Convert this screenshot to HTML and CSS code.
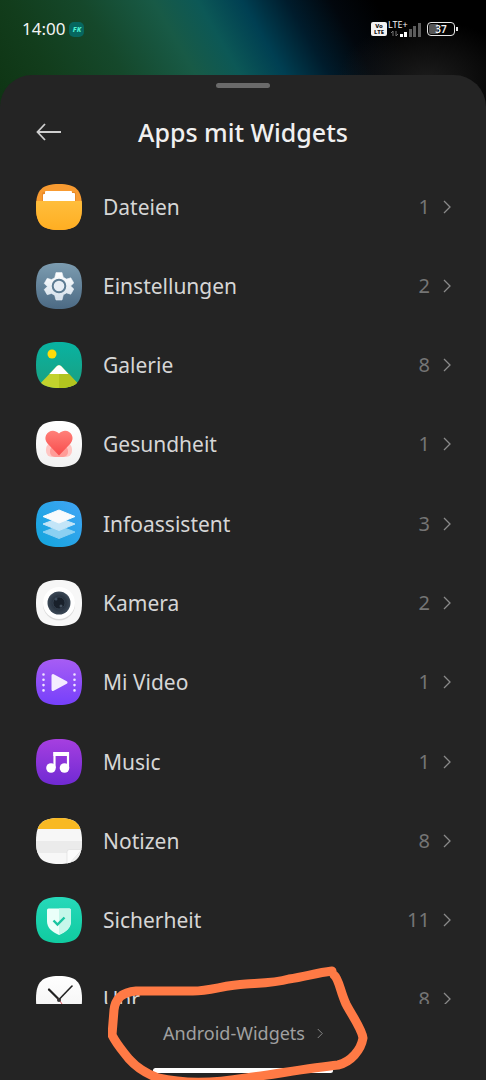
FILE: index.html
```html
<!DOCTYPE html>
<html lang="de">
<head>
    <meta charset="UTF-8">
    <meta name="viewport" content="width=device-width, initial-scale=1.0">
    <title>Apps mit Widgets</title>
    <link rel="stylesheet" href="styles.css">
</head>
<body>
    <!-- shared shapes -->
    <svg class="defs" width="0" height="0" aria-hidden="true">
        <defs>
            <clipPath id="tile"><path d="M23 0C40 0 46 6 46 23S40 46 23 46 0 40 0 23 6 0 23 0Z"/></clipPath>
            <linearGradient id="gFiles" x2="0" y2="1"><stop stop-color="#ffbe3c"/><stop offset="1" stop-color="#ffae22"/></linearGradient>
            <linearGradient id="gSettings" x2="0" y2="1"><stop stop-color="#7c9cb0"/><stop offset="1" stop-color="#4c6a84"/></linearGradient>
            <linearGradient id="gGear" x2="0" y2="1"><stop stop-color="#fff"/><stop offset="1" stop-color="#d3dfea"/></linearGradient>
            <linearGradient id="gGallery" x2="0" y2="1"><stop stop-color="#08b3a2"/><stop offset="1" stop-color="#1b9f80"/></linearGradient>
            <linearGradient id="gWhite" x2="0" y2="1"><stop stop-color="#fff"/><stop offset="1" stop-color="#f1f1f1"/></linearGradient>
            <linearGradient id="gHeart" x2="0" y2="1"><stop stop-color="#ff8079"/><stop offset="1" stop-color="#f84c4c"/></linearGradient>
            <linearGradient id="gInfo" x1="1" x2="0" y2="1"><stop stop-color="#42a4f5"/><stop offset="1" stop-color="#11a5dc"/></linearGradient>
            <radialGradient id="gLens"><stop stop-color="#161e28"/><stop offset=".6" stop-color="#2a3542"/><stop offset="1" stop-color="#3c4957"/></radialGradient>
            <linearGradient id="gVideo" x2="0" y2="1"><stop stop-color="#a75df4"/><stop offset="1" stop-color="#7640fb"/></linearGradient>
            <linearGradient id="gMusic" x2="0" y2="1"><stop stop-color="#a63fe0"/><stop offset="1" stop-color="#702ad3"/></linearGradient>
            <linearGradient id="gSafe" x2="0" y2="1"><stop stop-color="#26d9ba"/><stop offset="1" stop-color="#10cba0"/></linearGradient>
        </defs>
        <symbol id="chevron" viewBox="0 0 8 14"><path d="M1 1L7 7L1 13" fill="none" stroke="currentColor" stroke-width="1.3"/></symbol>
    </svg>

    <div class="status">
        <span class="time">14:00</span>
        <span class="fk">FK</span>
        <span class="volte"><span>Vo</span><span>LTE</span></span>
        <svg class="signal" width="33" height="18" viewBox="0 0 33 18">
            <text x="0" y="8">LTE+</text>
            <path d="M5 16V11L3 13M8 11V16L10 14" fill="none" stroke="#777"/>
            <path d="M12 14h3v3h-3zM16 12h3v5h-3z" fill="#fff"/>
            <path d="M21 9h3v8h-3zM25 6h3v11h-3zM30 3h3v14h-3z" fill="#5c5c5c"/>
        </svg>
        <span class="battery">37</span>
    </div>

    <main class="sheet">
        <div class="handle"></div>
        <header class="header">
            <button class="back" type="button" aria-label="Zurück">
                <svg width="26" height="18" viewBox="0 0 26 18"><path d="M25 9H2M9 1L1.500 9L9 17" fill="none" stroke="#cfcfcf" stroke-width="1.800"/></svg>
            </button>
            <h1>Apps mit Widgets</h1>
        </header>

        <div class="list-wrap">
            <ul class="list">
                <li><a class="row" href="#dateien">
                    <svg class="icon" viewBox="0 0 46 46"><g clip-path="url(#tile)"><rect width="46" height="46" fill="#f89b31"/><path d="M6 10Q6 8 8 8H38Q40 8 40 10V18H6Z" fill="#e98a28"/><path d="M9 8Q9 7 10 7H35Q36 7 36 8V9H38Q39 9 39 10V18H7V11Q7 10 8 10H9Z" fill="#fff"/><rect y="17" width="46" height="29" fill="url(#gFiles)"/></g></svg>
                    <span class="name">Dateien</span><span class="count">1</span><svg class="chev"><use href="#chevron"/></svg></a></li>
                <li><a class="row" href="#einstellungen">
                    <svg class="icon" viewBox="0 0 46 46"><g clip-path="url(#tile)"><rect width="46" height="46" fill="url(#gSettings)"/><path d="M20 9.500h6l1.300 4.700 3.200 1.900 4.300-1.300 3 5.200-3.200 3 3.200 3-3 5.200-4.300-1.300-3.200 1.900L26 37h-6l-1.300-4.700-3.200-1.900-4.300 1.300-3-5.200 3.200-3-3.200-3 3-5.200 4.300 1.300 3.200-1.900Z" fill="url(#gGear)" stroke="#e9f0f6" stroke-linejoin="round" stroke-width=".6"/><circle cx="23" cy="23" r="6.300" fill="#e6edf4" stroke="#5d7c93" stroke-width="2"/></g></svg>
                    <span class="name">Einstellungen</span><span class="count">2</span><svg class="chev"><use href="#chevron"/></svg></a></li>
                <li><a class="row" href="#galerie">
                    <svg class="icon" viewBox="0 0 46 46"><g clip-path="url(#tile)"><rect width="46" height="46" fill="url(#gGallery)"/><circle cx="16" cy="12" r="4.500" fill="#ffdc0a"/><path d="M0 46L20.500 24.500Q23 22 25.500 24.500L46 46Z" fill="#c2d22d"/><path d="M23 32H33L46 46H23Z" fill="#b2c41f"/><path d="M13.400 32L20.500 24.500Q23 22 25.500 24.500L32.600 32Z" fill="#fff"/></g></svg>
                    <span class="name">Galerie</span><span class="count">8</span><svg class="chev"><use href="#chevron"/></svg></a></li>
                <li><a class="row" href="#gesundheit">
                    <svg class="icon" viewBox="0 0 46 46"><g clip-path="url(#tile)"><rect width="46" height="46" fill="url(#gWhite)"/><rect x="10" y="22" width="26" height="14" rx="6" fill="#ffc6c3"/><rect x="14" y="25" width="18" height="11" rx="5" fill="#ff9c98"/><path d="M23 34.500L11.500 22.500C5 15 15 5 23 12.500C31 5 41 15 34.500 22.500Z" fill="url(#gHeart)"/></g></svg>
                    <span class="name">Gesundheit</span><span class="count">1</span><svg class="chev"><use href="#chevron"/></svg></a></li>
                <li><a class="row" href="#infoassistent">
                    <svg class="icon" viewBox="0 0 46 46"><g clip-path="url(#tile)"><rect width="46" height="46" fill="url(#gInfo)"/><g stroke-linejoin="round"><path d="M23 25L39 31L23 37.500L7 31Z" fill="#8bd0f2" stroke="#8bd0f2"/><path d="M23 17L39 23L23 29.500L7 23Z" fill="#c3e5f8" stroke="#c3e5f8"/><path d="M23 9L39 15.500L23 22L7 15.500Z" fill="#f8fafc" stroke="#f8fafc"/></g></g></svg>
                    <span class="name">Infoassistent</span><span class="count">3</span><svg class="chev"><use href="#chevron"/></svg></a></li>
                <li><a class="row" href="#kamera">
                    <svg class="icon" viewBox="0 0 46 46"><g clip-path="url(#tile)"><rect width="46" height="46" fill="#f7f7f7"/><circle cx="23" cy="24.500" r="16" fill="#dcdcdc"/><circle cx="23" cy="23" r="16" fill="#fff"/><circle cx="23" cy="23" r="11.500" fill="url(#gLens)"/><circle cx="23" cy="23" r="6" fill="#18202a" stroke="#3b4856" stroke-width=".7"/><circle cx="25" cy="26" r="1.500" fill="#465361"/><circle cx="20" cy="19" r="1.500" fill="#3b4b5c"/></g></svg>
                    <span class="name">Kamera</span><span class="count">2</span><svg class="chev"><use href="#chevron"/></svg></a></li>
                <li><a class="row" href="#mivideo">
                    <svg class="icon" viewBox="0 0 46 46"><g clip-path="url(#tile)"><rect width="46" height="46" fill="url(#gVideo)"/><path d="M17 16.500L30 23.500L17 30.500Z" fill="#f4ecff" stroke="#f4ecff" stroke-width="3" stroke-linejoin="round"/><path d="M7.500 15.500V32M38.500 15.500V32" stroke="#f0e5ff" stroke-width="2.600" stroke-linecap="round" stroke-dasharray="0 5.300"/></g></svg>
                    <span class="name">Mi Video</span><span class="count">1</span><svg class="chev"><use href="#chevron"/></svg></a></li>
                <li><a class="row" href="#music">
                    <svg class="icon" viewBox="0 0 46 46"><g clip-path="url(#tile)"><rect width="46" height="46" fill="url(#gMusic)"/><path d="M18.500 29V14H32V29" fill="none" stroke="#fff" stroke-width="2.200"/><path d="M17.400 13H33V17H17.400Z" fill="#fff"/><circle cx="15" cy="29" r="4.800" fill="#fff"/><circle cx="28.500" cy="29" r="4.800" fill="#fff"/></g></svg>
                    <span class="name">Music</span><span class="count">1</span><svg class="chev"><use href="#chevron"/></svg></a></li>
                <li><a class="row" href="#notizen">
                    <svg class="icon" viewBox="0 0 46 46"><g clip-path="url(#tile)"><rect width="46" height="46" fill="#f7f7f7"/><rect width="46" height="11" fill="#f8b923"/><path d="M0 23H46V35H0Z" fill="#ebebeb"/><path d="M31 46V34Q31 31.500 33.500 31.500H46L34 45Z" fill="#fcfcfc" stroke="#dedede" stroke-width=".7"/><path d="M34 46L46 33V46Z" fill="#ededed"/></g></svg>
                    <span class="name">Notizen</span><span class="count">8</span><svg class="chev"><use href="#chevron"/></svg></a></li>
                <li><a class="row" href="#sicherheit">
                    <svg class="icon" viewBox="0 0 46 46"><g clip-path="url(#tile)"><rect width="46" height="46" fill="url(#gSafe)"/><path d="M11 13Q11 11.500 12.500 11.500H33.500Q35 11.500 35 13V24C35 31 30 35 23 38C16 35 11 31 11 24Z" fill="#eafff9"/><path d="M23 11.500H33.500Q35 11.500 35 13V24C35 31 30 35 23 38Z" fill="#c5f7ea"/><path d="M17.500 23.500L21.500 27.500L28.500 20.500" fill="none" stroke="#19c5a1" stroke-width="2.400"/></g></svg>
                    <span class="name">Sicherheit</span><span class="count">11</span><svg class="chev"><use href="#chevron"/></svg></a></li>
                <li><a class="row" href="#uhr">
                    <svg class="icon" viewBox="0 0 46 46"><g clip-path="url(#tile)"><rect width="46" height="46" fill="url(#gWhite)"/><path d="M13 13.500L23 23.500" stroke="#222" stroke-width="2.200" stroke-linecap="round"/><path d="M23 23.500L36 10" stroke="#222" stroke-width="1.600" stroke-linecap="round"/><path d="M22 22L30 34" stroke="#d8505a"/><circle cx="23" cy="24" r="2" fill="#333"/></g></svg>
                    <span class="name">Uhr</span><span class="count">8</span><svg class="chev"><use href="#chevron"/></svg></a></li>
            </ul>
        </div>

        <footer class="footer">
            <a class="more" href="#android-widgets">Android-Widgets<svg class="chev small"><use href="#chevron"/></svg></a>
            <div class="homebar"></div>
            <!-- hand-drawn marker round the link -->
            <svg class="marker" width="260" height="120" viewBox="108 964 260 120" aria-hidden="true">
                <path d="M332 971C315 973 305 977 289 979C275 983 261 983 246 984C224 985 211 991 193 991H136C122 992 115 999 114 1010L112 1035C117 1045 122 1050 129 1059C138 1069 147 1074 158 1078C188 1085 222 1082 246 1078C282 1073 310 1068 338 1065C351 1062 361 1050 363 1038C362 1029 351 1014 346 1004C340 991 339 979 334 975"/>
            </svg>
        </footer>
    </main>
</body>
</html>
```

FILE: styles.css
```css
* {
    box-sizing: border-box;
}
body {
    margin: 0;
    height: 100vh;
    display: flex;
    flex-direction: column;
    overflow: hidden;
    font-family: "Noto Sans", Roboto, sans-serif;
    color: #d6d6d6;
    background-color: #000;
    background-image:
        radial-gradient(ellipse 90px 60px at 88% 80px, #1c1c1c, transparent),
        linear-gradient(60deg, #0e3312 0%, #123d1c 14%, #15482b 27%, #185a46 40%, #0c5856 48%, #003f52 56%, #001c2c 64%, #02070d 72%, #000 80%);
    background-size: 100% 120px;
    background-repeat: no-repeat;
}
a {
    color: inherit;
    text-decoration: none;
}
.defs {
    position: absolute;
}

/* status bar */
.status {
    flex: none;
    display: flex;
    align-items: center;
    height: 75px;
    padding: 0 28px 17px 22px;
    color: #f4f4f4;
}
.time {
    font-size: 17px;
    line-height: 20px;
}
.fk {
    width: 15px;
    height: 15px;
    margin-left: 4px;
    border-radius: 5px;
    background-color: #07665f;
    color: #4df0d0;
    font-size: 7px;
    line-height: 15px;
    font-weight: 800;
    font-style: italic;
    text-align: center;
}
.volte {
    display: flex;
    flex-direction: column;
    align-items: center;
    width: 16px;
    height: 14px;
    padding-top: 1px;
    margin-left: auto;
    border-radius: 2px;
    background-color: #f2f2f2;
    color: #111;
    font-size: 6px;
    line-height: 6px;
    font-weight: 800;
}
.signal {
    margin: 0 6px 0 1px;
}
.signal text {
    font-size: 9px;
    fill: #f4f4f4;
}
.battery {
    position: relative;
    width: 28px;
    height: 14px;
    margin-right: 3px;
    border: 1px solid #e8e8e8;
    border-radius: 4px;
    background: linear-gradient(90deg, #555 36%, transparent 36%) content-box;
    padding: 1px;
    font-size: 10px;
    line-height: 10px;
    font-weight: 600;
    text-align: center;
}
.battery::after {
    content: "";
    position: absolute;
    top: 4px;
    right: -4px;
    width: 2px;
    height: 4px;
    background-color: #e8e8e8;
}

/* sheet */
.sheet {
    flex: 1;
    min-height: 0;
    display: flex;
    flex-direction: column;
    background-color: #242424;
    border-radius: 32px 32px 0 0;
}
.handle {
    flex: none;
    width: 54px;
    height: 5px;
    margin: 8px auto;
    border-radius: 3px;
    background-color: #6a6a6a;
}
.header {
    flex: none;
    display: grid;
    grid-template-columns: 1fr auto 1fr;
    align-items: center;
    height: 71px;
    padding: 0 36px;
}
.header h1 {
    margin: 0;
    font-size: 25px;
    line-height: 34px;
    font-weight: 500;
    color: #f0f0f0;
}
.back {
    display: flex;
    justify-self: start;
    padding: 0;
    border: none;
    background: none;
    cursor: pointer;
}

/* app list */
.list-wrap {
    flex: 1;
    min-height: 0;
    overflow: hidden;
}
.list {
    display: grid;
    grid-auto-rows: 1fr;
    height: 872px;
    margin: 0;
    padding: 0;
    list-style: none;
}
.row {
    display: flex;
    align-items: center;
    height: 100%;
    padding: 0 35px 0 36px;
}
.icon {
    flex: none;
    width: 46px;
    height: 46px;
    margin-right: 21px;
}
.name {
    flex: 1;
    font-size: 21px;
    line-height: 28px;
}
.count {
    margin-right: 13px;
    font-size: 20px;
    line-height: 28px;
    color: #757575;
}
.chev {
    flex: none;
    width: 8px;
    height: 14px;
    color: #8a8a8a;
}

/* footer */
.footer {
    position: relative;
    flex: none;
    display: flex;
    flex-direction: column;
    align-items: center;
    justify-content: space-between;
    height: 76px;
    padding: 16px 0 7px;
}
.more {
    display: flex;
    align-items: center;
    gap: 12px;
    font-size: 18px;
    line-height: 26px;
    color: #a0a0a0;
}
.small {
    width: 6px;
    height: 11px;
}
.homebar {
    width: 180px;
    height: 5px;
    border-radius: 3px;
    background-color: #fff;
}
.marker {
    position: absolute;
    left: 50%;
    bottom: -4px;
    margin-left: -135px;
    pointer-events: none;
}
.marker path {
    fill: none;
    stroke: #ff7a45;
    stroke-width: 9px;
    stroke-linecap: round;
    stroke-linejoin: round;
}
```
